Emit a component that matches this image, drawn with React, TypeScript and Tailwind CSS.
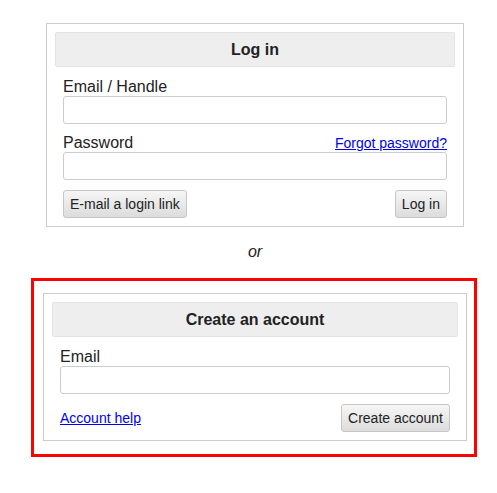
import React from "react";

function Header({ children }: { children: React.ReactNode }) {
  return (
    <div className="h-[35px] flex items-center justify-center bg-[#eeeeee] border border-[#e3e3e3] rounded-[2px] text-[16px] font-bold text-[#222222]">
      {children}
    </div>
  );
}

function Btn({ children }: { children: React.ReactNode }) {
  return (
    <button className="h-[28px] px-[6px] text-[14px] text-[#222222] border border-[#c6c6c6] rounded-[3px] bg-gradient-to-b from-[#f6f6f6] to-[#dcdcdc] leading-none">
      {children}
    </button>
  );
}

function Input({ type = "text" }: { type?: string }) {
  return (
    <input
      type={type}
      className="block w-full h-[28px] border border-[#cccccc] rounded-[3px] bg-white outline-none"
    />
  );
}

export default function App() {
  return (
    <div
      className="min-h-[493px] bg-white pt-[23px] text-[#222222]"
      style={{ fontFamily: '"Liberation Sans", Arial, sans-serif' }}
    >
      <div className="ml-[46px] w-[418px]">
        <div className="border border-[#cccccc] p-2">
          <Header>Log in</Header>
          <div className="px-2">
            <div className="mt-[11px] text-[16px] leading-[18px] h-[18px]">Email / Handle</div>
            <div>
              <Input />
            </div>
            <div className="mt-[10px] flex items-baseline justify-between h-[18px] leading-[18px]">
              <span className="text-[16px]">Password</span>
              <a href="#" className="text-[14px] text-[#0000ee] underline">
                Forgot password?
              </a>
            </div>
            <div>
              <Input type="password" />
            </div>
            <div className="mt-[10px] flex items-center justify-between">
              <Btn>E-mail a login link</Btn>
              <Btn>Log in</Btn>
            </div>
          </div>
        </div>
        <div className="mt-[16px] h-[18px] leading-[18px] text-center text-[16px] italic text-[#222222]">or</div>
      </div>
      <div className="mt-[17px] ml-[31px] w-[446px] border-[3px] border-[#ff0000] pl-[9px] pr-[7px] pt-[12px] pb-[13px]">
        <div className="border border-[#cccccc] p-2">
          <Header>Create an account</Header>
          <div className="px-2">
            <div className="mt-[11px] text-[16px] leading-[18px] h-[18px]">Email</div>
            <div>
              <Input type="email" />
            </div>
            <div className="mt-[10px] flex items-center justify-between">
              <a href="#" className="text-[14px] text-[#0000ee] underline">
                Account help
              </a>
              <Btn>Create account</Btn>
            </div>
          </div>
        </div>
      </div>
    </div>
  );
}
